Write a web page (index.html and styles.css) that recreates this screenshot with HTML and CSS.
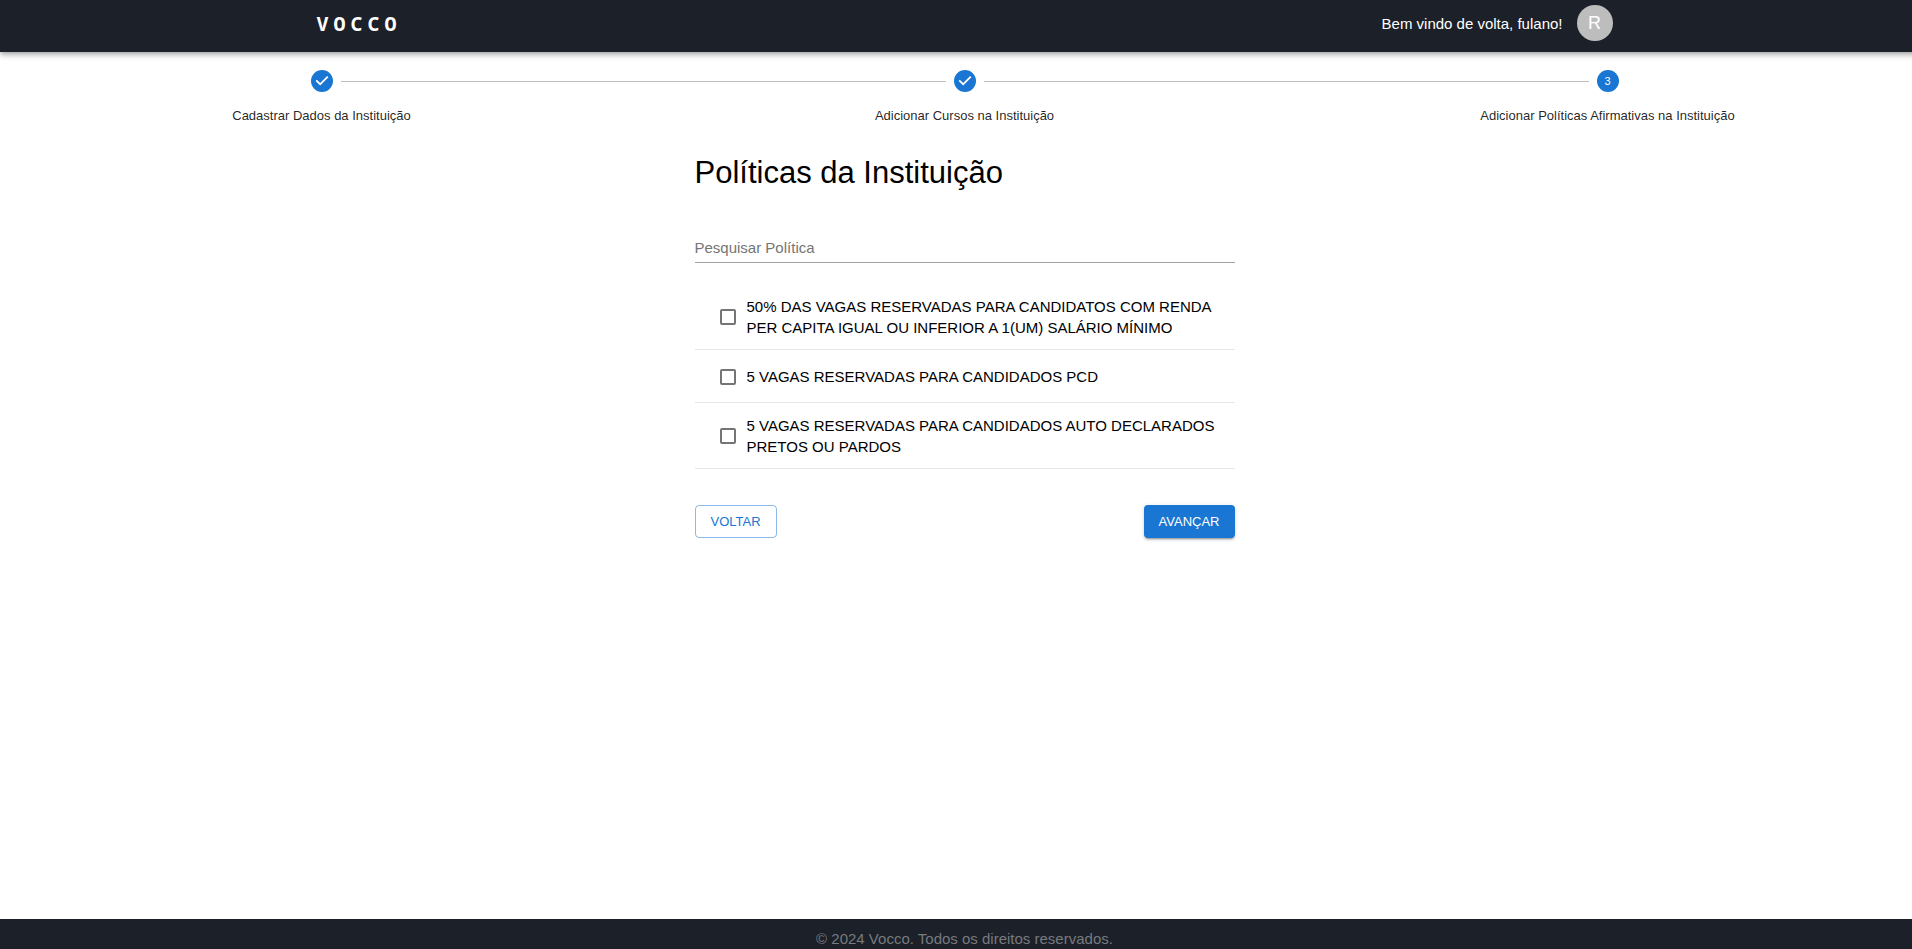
FILE: index.html
```html
<!DOCTYPE html>
<html lang="pt-BR">
<head>
<meta charset="utf-8">
<title>Vocco</title>
<meta name="viewport" content="width=device-width, initial-scale=1">
<link rel="stylesheet" href="styles.css">
</head>
<body>
<div class="page">
  <header class="topbar">
    <div class="topbar-inner">
      <a class="logo" href="#">VOCCO</a>
      <div class="user">
        <span>Bem vindo de volta, fulano!</span>
        <button class="avatar" type="button" aria-label="Conta">R</button>
      </div>
    </div>
  </header>

  <ol class="stepper">
    <li class="step">
      <div class="step-track">
        <span class="step-line step-line-none"></span>
        <svg class="step-icon" viewBox="0 0 24 24" aria-hidden="true"><path d="M12 0a12 12 0 1 0 0 24 12 12 0 0 0 0-24zm-2 17l-5-5 1.4-1.4 3.6 3.6 7.6-7.6L19 8l-9 9z"/></svg>
        <span class="step-line"></span>
      </div>
      <span class="step-label">Cadastrar Dados da Instituição</span>
    </li>
    <li class="step">
      <div class="step-track">
        <span class="step-line"></span>
        <svg class="step-icon" viewBox="0 0 24 24" aria-hidden="true"><path d="M12 0a12 12 0 1 0 0 24 12 12 0 0 0 0-24zm-2 17l-5-5 1.4-1.4 3.6 3.6 7.6-7.6L19 8l-9 9z"/></svg>
        <span class="step-line"></span>
      </div>
      <span class="step-label">Adicionar Cursos na Instituição</span>
    </li>
    <li class="step" aria-current="step">
      <div class="step-track">
        <span class="step-line"></span>
        <span class="step-number">3</span>
        <span class="step-line step-line-none"></span>
      </div>
      <span class="step-label">Adicionar Políticas Afirmativas na Instituição</span>
    </li>
  </ol>

  <main class="content">
    <h1 class="title">Políticas da Instituição</h1>
    <input class="search" type="text" placeholder="Pesquisar Política" aria-label="Pesquisar Política">
    <ul class="policies">
      <li><label class="policy"><input class="check" type="checkbox"><span>50% DAS VAGAS RESERVADAS PARA CANDIDATOS COM RENDA PER CAPITA IGUAL OU INFERIOR A 1(UM) SALÁRIO MÍNIMO</span></label></li>
      <li><label class="policy"><input class="check" type="checkbox"><span>5 VAGAS RESERVADAS PARA CANDIDADOS PCD</span></label></li>
      <li><label class="policy"><input class="check" type="checkbox"><span>5 VAGAS RESERVADAS PARA CANDIDADOS AUTO DECLARADOS PRETOS OU PARDOS</span></label></li>
    </ul>
    <div class="actions">
      <button class="btn btn-outlined" type="button">VOLTAR</button>
      <button class="btn btn-contained" type="button">AVANÇAR</button>
    </div>
  </main>

  <footer class="footer">© 2024 Vocco. Todos os direitos reservados.</footer>
</div>
</body>
</html>
```
FILE: styles.css
```css
* {
  box-sizing: border-box;
}

body {
  margin: 0;
  overflow: hidden;
  font-family: "Liberation Sans", Arial, sans-serif;
  font-size: 15px;
  line-height: 21px;
  color: #000;
  background: #fff;
}

.page {
  display: flex;
  flex-direction: column;
  width: calc(100% + 17px);
  min-height: 100vh;
}

.topbar {
  background: #1c2029;
  color: #fff;
  padding: 5px 24px 11px;
  box-shadow: 0 2px 4px -1px rgba(0, 0, 0, 0.2), 0 4px 5px rgba(0, 0, 0, 0.14), 0 1px 9px rgba(0, 0, 0, 0.12);
}

.topbar-inner {
  display: flex;
  align-items: center;
  justify-content: space-between;
  max-width: 1296px;
  margin: 0 auto;
}

.logo {
  font-family: "Noto Sans Mono", "DejaVu Sans Mono", monospace;
  font-size: 20px;
  font-weight: 700;
  letter-spacing: 5px;
  color: inherit;
  text-decoration: none;
}

.user {
  display: flex;
  align-items: center;
  gap: 14px;
}

.avatar {
  width: 36px;
  height: 36px;
  padding: 0;
  border: 0;
  border-radius: 50%;
  background: #bdbdbd;
  color: #fff;
  font: 18px/36px "Liberation Sans", Arial, sans-serif;
}

.stepper {
  display: flex;
  margin: 18px 0 0;
  padding: 0;
  list-style: none;
}

.step {
  flex: 1;
  text-align: center;
}

.step-track {
  display: flex;
  align-items: center;
  gap: 8px;
}

.step-line {
  flex: 1;
  height: 1px;
  background: #bdbdbd;
}

.step-line-none {
  background: none;
}

.step-icon,
.step-number {
  width: 22px;
  height: 22px;
}

.step-icon {
  fill: #1976d2;
}

.step-number {
  border-radius: 50%;
  background: #1976d2;
  color: #fff;
  font-size: 11px;
  line-height: 22px;
}

.step-label {
  display: block;
  margin-top: 15px;
  font-size: 13px;
  line-height: 18px;
  color: rgba(0, 0, 0, 0.87);
}

.content {
  width: 100%;
  max-width: 540px;
  margin: 29px auto 0;
}

.title {
  margin: 0;
  font-size: 31px;
  font-weight: 400;
  line-height: 38px;
}

.search {
  display: block;
  width: 100%;
  height: 29px;
  margin-top: 42px;
  padding: 0 0 1px;
  border: 0;
  border-bottom: 1px solid #a3a3a3;
  outline: 0;
  background: none;
  font: 15px/21px "Liberation Sans", Arial, sans-serif;
}

.search::placeholder {
  color: #757575;
  opacity: 1;
}

.policies {
  margin: 21px 0 0;
  padding: 0;
  list-style: none;
}

.policy {
  display: flex;
  align-items: center;
  gap: 11px;
  min-height: 53px;
  padding: 12px 16px 11px 25px;
  border-bottom: 1px solid #e6e6e6;
}

.check {
  flex: none;
  appearance: none;
  width: 16px;
  height: 16px;
  margin: 0;
  border: 2px solid #757575;
  border-radius: 2px;
}

.check:checked {
  border-color: #1976d2;
  background: #1976d2;
}

.actions {
  display: flex;
  justify-content: space-between;
  margin-top: 36px;
}

.btn {
  height: 33px;
  padding: 0 15px;
  border: 0;
  border-radius: 4px;
  font: 13px/21px "Liberation Sans", Arial, sans-serif;
}

.btn-outlined {
  border: 1px solid rgba(25, 118, 210, 0.5);
  background: none;
  color: #1976d2;
}

.btn-contained {
  background: #1976d2;
  color: #fff;
  box-shadow: 0 3px 1px -2px rgba(0, 0, 0, 0.2), 0 2px 2px rgba(0, 0, 0, 0.14), 0 1px 5px rgba(0, 0, 0, 0.12);
}

.footer {
  margin-top: auto;
  padding: 9px 0 0;
  background: #1c2029;
  color: #777a7f;
  text-align: center;
}
```
